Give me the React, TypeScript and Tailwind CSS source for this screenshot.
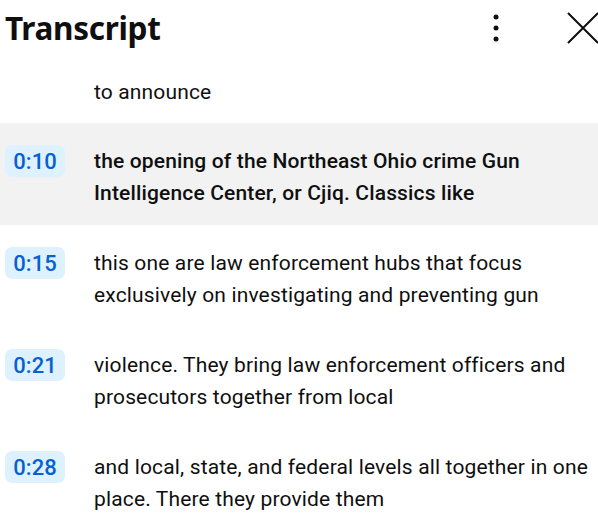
const rows = [
  { time: "0:10", text: "the opening of the Northeast Ohio crime Gun Intelligence Center, or Cjiq. Classics like", active: true },
  { time: "0:15", text: "this one are law enforcement hubs that focus exclusively on investigating and preventing gun" },
  { time: "0:21", text: "violence. They bring law enforcement officers and prosecutors together from local" },
  { time: "0:28", text: "and local, state, and federal levels all together in one place. There they provide them" },
];

const App = () => {
  return (
    <div className="w-[598px] h-[531px] overflow-hidden bg-white text-[#0f0f0f] font-['Roboto',sans-serif]">
      {/* Header */}
      <div className="h-[60px] flex items-center pl-[5px]">
        <h1 className="text-[31.5px] font-bold tracking-[-0.3px] font-['Noto_Sans',sans-serif] leading-none pb-[4px]">
          Transcript
        </h1>
        <div className="ml-auto flex items-center">
          <button className="w-[24px] h-[40px] flex items-center justify-center mr-[58px] mb-[4px]">
            <svg width="6" height="28" viewBox="0 0 6 28">
              <circle cx="3" cy="3" r="2.5" fill="#0f0f0f" />
              <circle cx="3" cy="14" r="2.5" fill="#0f0f0f" />
              <circle cx="3" cy="25" r="2.5" fill="#0f0f0f" />
            </svg>
          </button>
          <button className="w-[34px] h-[40px] flex items-center justify-center mr-[-2px] mb-[4px]">
            <svg width="32" height="32" viewBox="0 0 32 32">
              <path d="M1 1 L31 31 M31 1 L1 31" stroke="#0f0f0f" strokeWidth="2" fill="none" />
            </svg>
          </button>
        </div>
      </div>

      {/* Partial row */}
      <div className="pt-[16px] pb-[15px] pl-[94px] text-[21px] tracking-[0.15px] leading-[32px]">to announce</div>

      {/* Rows */}
      {rows.map((r) => (
        <div
          key={r.time}
          className={`flex items-start pt-[22px] pb-[16px] pl-[5px] ${r.active ? "bg-[#f2f2f2]" : ""}`}
        >
          <span className="w-[60px] h-[32px] shrink-0 rounded-[7px] bg-[#def1ff] text-[#065fd4] text-[22px] font-medium flex items-center justify-center">
            {r.time}
          </span>
          <p
            className={`ml-[29px] mr-[6px] text-[21px] tracking-[0.15px] leading-[32px] ${r.active ? "font-medium" : ""}`}
          >
            {r.text}
          </p>
        </div>
      ))}
    </div>
  );
};

export default App;
